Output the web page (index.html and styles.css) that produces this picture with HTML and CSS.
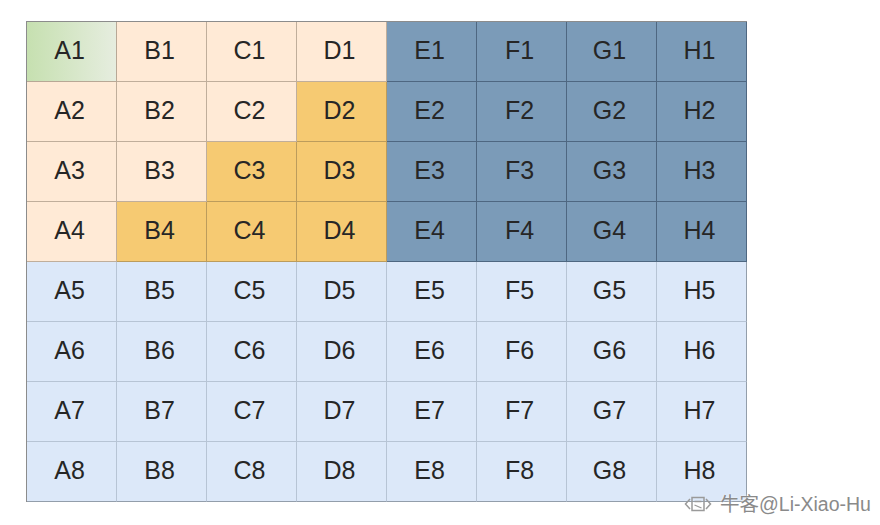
FILE: index.html
```html
<!DOCTYPE html>
<html>
<head>
<meta charset="utf-8">
<link rel="stylesheet" href="styles.css">
</head>
<body>
<div class="page">
  <div class="grid">
    <div class="cell green">A1</div><div class="cell peach">B1</div><div class="cell peach">C1</div><div class="cell peach">D1</div><div class="cell dark">E1</div><div class="cell dark">F1</div><div class="cell dark">G1</div><div class="cell dark">H1</div>
    <div class="cell peach">A2</div><div class="cell peach">B2</div><div class="cell peach">C2</div><div class="cell orange">D2</div><div class="cell dark">E2</div><div class="cell dark">F2</div><div class="cell dark">G2</div><div class="cell dark">H2</div>
    <div class="cell peach">A3</div><div class="cell peach">B3</div><div class="cell orange">C3</div><div class="cell orange">D3</div><div class="cell dark">E3</div><div class="cell dark">F3</div><div class="cell dark">G3</div><div class="cell dark">H3</div>
    <div class="cell peach">A4</div><div class="cell orange">B4</div><div class="cell orange">C4</div><div class="cell orange">D4</div><div class="cell dark">E4</div><div class="cell dark">F4</div><div class="cell dark">G4</div><div class="cell dark">H4</div>
    <div class="cell light">A5</div><div class="cell light">B5</div><div class="cell light">C5</div><div class="cell light">D5</div><div class="cell light">E5</div><div class="cell light">F5</div><div class="cell light">G5</div><div class="cell light">H5</div>
    <div class="cell light">A6</div><div class="cell light">B6</div><div class="cell light">C6</div><div class="cell light">D6</div><div class="cell light">E6</div><div class="cell light">F6</div><div class="cell light">G6</div><div class="cell light">H6</div>
    <div class="cell light">A7</div><div class="cell light">B7</div><div class="cell light">C7</div><div class="cell light">D7</div><div class="cell light">E7</div><div class="cell light">F7</div><div class="cell light">G7</div><div class="cell light">H7</div>
    <div class="cell light">A8</div><div class="cell light">B8</div><div class="cell light">C8</div><div class="cell light">D8</div><div class="cell light">E8</div><div class="cell light">F8</div><div class="cell light">G8</div><div class="cell light">H8</div>
  </div>
  <div class="watermark">
    <svg class="wm-icon" width="28" height="20" viewBox="0 0 28 20">
      <path d="M6 5 L1.5 10 L6 15" fill="none" stroke="#9a9a9a" stroke-width="1.5"/>
      <path d="M22 5 L26.5 10 L22 15" fill="none" stroke="#9a9a9a" stroke-width="1.5"/>
      <rect x="8" y="3.5" width="12" height="13" fill="none" stroke="#9a9a9a" stroke-width="1.5"/>
      <path d="M10.5 7.5 H17.5 M10.5 11 L17.5 14" fill="none" stroke="#9a9a9a" stroke-width="1.3"/>
    </svg>
    <span class="wm-text">牛客@Li-Xiao-Hu</span>
  </div>
</div>
</body>
</html>
```

FILE: styles.css
```css
html, body {
  margin: 0;
  padding: 0;
  background: #ffffff;
}

.page {
  position: relative;
  width: 880px;
  height: 525px;
  padding: 21px 0 0 26px;
  box-sizing: border-box;
}

.grid {
  display: grid;
  grid-template-columns: repeat(8, 90px);
  grid-auto-rows: 60px;
  width: 720px;
  border-left: 1px solid #8c8c8c;
  border-top: 1px solid #8c8c8c;
}

.cell {
  box-sizing: border-box;
  display: flex;
  align-items: center;
  justify-content: center;
  padding-right: 4px;
  padding-bottom: 2px;
  font-family: "Liberation Sans", Arial, sans-serif;
  font-size: 25px;
  color: #262626;
  border-right: 1px solid #b8a896;
  border-bottom: 1px solid #b8a896;
}

.green {
  background: linear-gradient(to right, #c6e0b0, #e6eddf);
  border-color: #9fae93 #b8a896 #b8a896 #b8a896;
}

.peach {
  background: #ffead6;
  border-color: #c0ae9b;
}

.orange {
  background: #f6ca72;
  border-color: #bc9c5c;
}

.dark {
  background: #7b9bb8;
  border-color: #4e6781;
}

.light {
  background: #dce8f9;
  border-color: #b7c4d5;
}

.light:nth-child(n+57) {
  border-bottom-color: #939eab;
}

.light:nth-child(8n) {
  border-right-color: #939eab;
}

.watermark {
  position: absolute;
  left: 684px;
  top: 493px;
  display: flex;
  align-items: center;
  gap: 8px;
}

.wm-icon {
  display: block;
}

.wm-text {
  font-family: "Liberation Sans", "Noto Sans CJK SC", sans-serif;
  font-size: 19.5px;
  color: #8a8a8a;
  line-height: 22px;
  text-shadow: 0 0 2px #ffffff;
}
```
